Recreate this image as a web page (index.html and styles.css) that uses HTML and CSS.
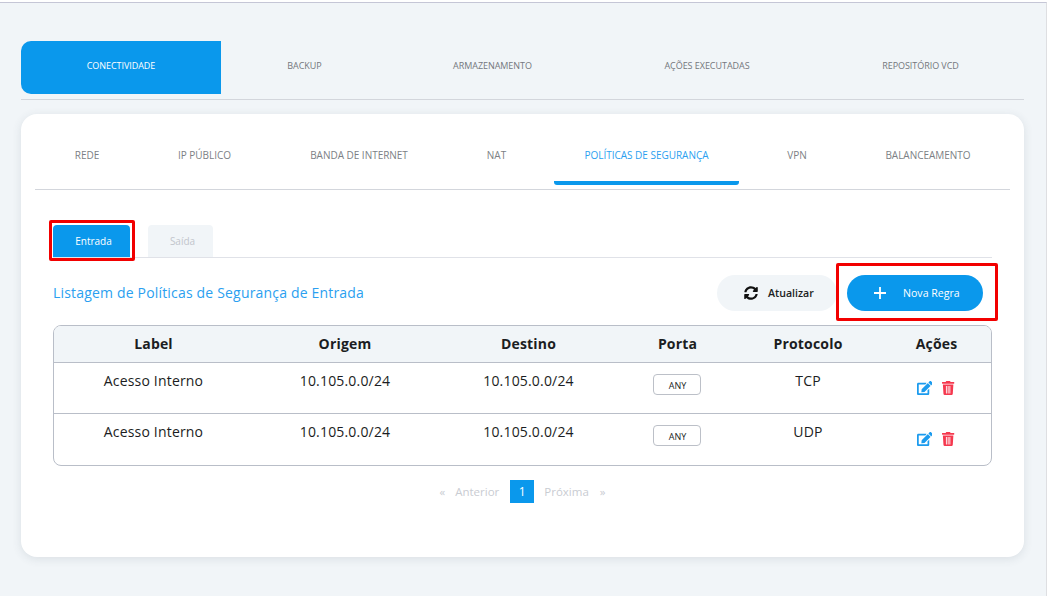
FILE: index.html
```html
<!DOCTYPE html>
<html lang="pt">
<head>
<meta charset="utf-8">
<title>Políticas de Segurança</title>
<link rel="stylesheet" href="styles.css">
</head>
<body>
<div class="page">
  <nav class="main-tabs">
    <a class="main-tab main-tab-1 is-active">CONECTIVIDADE</a>
    <a class="main-tab main-tab-2">BACKUP</a>
    <a class="main-tab main-tab-3">ARMAZENAMENTO</a>
    <a class="main-tab main-tab-4">AÇÕES EXECUTADAS</a>
    <a class="main-tab main-tab-5">REPOSITÓRIO VCD</a>
  </nav>
  <main class="card">
    <nav class="sub-tabs">
      <a class="sub-tab st-1">REDE</a>
      <a class="sub-tab st-2">IP PÚBLICO</a>
      <a class="sub-tab st-3">BANDA DE INTERNET</a>
      <a class="sub-tab st-4">NAT</a>
      <a class="sub-tab st-5 is-active">POLÍTICAS DE SEGURANÇA</a>
      <a class="sub-tab st-6">VPN</a>
      <a class="sub-tab st-7">BALANCEAMENTO</a>
    </nav>
    <section class="content">
      <div class="pills">
        <a class="pill pill-on">Entrada<span class="mark mark-pill"></span></a>
        <a class="pill pill-off">Saída</a>
      </div>
      <div class="toolbar">
        <h2 class="title">Listagem de Políticas de Segurança de Entrada</h2>
        <div class="actions">
          <button class="btn btn-light">
            <svg class="ico-refresh" viewBox="0 0 512 512"><path d="M370.7 133.3C339.5 104 298.9 88 255.800 88c-77.500.1-144.300 53.200-162.800 126.900-1.300 5.400-6.100 9.200-11.700 9.200H24.100c-7.500 0-13.200-6.800-11.800-14.200C33.900 94.900 134.800 8 256 8c66.500 0 126.800 26.100 171.300 68.700L463 41c15.100-15.100 41-4.400 41 17v134c0 13.300-10.700 24-24 24H346c-21.400 0-32.100-25.900-17-41zM32 296h134c21.400 0 32.100 25.900 17 41l-41.800 41.800c31.300 29.300 71.800 45.300 114.900 45.200 77.400-.1 144.300-53.100 162.800-126.800 1.300-5.400 6.100-9.200 11.700-9.200h57.300c7.500 0 13.200 6.800 11.800 14.200C478.100 417.100 377.200 504 256 504c-66.500 0-126.800-26.100-171.300-68.700L49 471c-15.100 15.100-41 4.400-41-17V320c0-13.300 10.700-24 24-24z"/></svg>
            Atualizar
          </button>
          <button class="btn btn-primary">
            <svg class="ico-plus" viewBox="0 0 12 12"><path d="M6 0v12M0 6h12"/></svg>
            Nova Regra
            <span class="mark mark-btn"></span>
          </button>
        </div>
      </div>
      <div class="table">
        <div class="row head">
          <div>Label</div><div>Origem</div><div>Destino</div><div>Porta</div><div>Protocolo</div><div>Ações</div>
        </div>
        <div class="row body">
          <div>Acesso Interno</div><div>10.105.0.0/24</div><div>10.105.0.0/24</div>
          <div><span class="any">ANY</span></div><div>TCP</div>
          <div class="ops">
            <svg class="ico-edit" viewBox="0 0 576 512"><path d="M402.600 83.200l90.200 90.200c3.800 3.800 3.800 10 0 13.800L274.400 405.600l-92.800 10.300c-12.400 1.400-22.900-9.100-21.500-21.500l10.300-92.800L388.800 83.200c3.800-3.800 10-3.800 13.800 0zm162-22.900l-48.800-48.800c-15.200-15.200-39.900-15.200-55.200 0l-35.400 35.400c-3.800 3.800-3.800 10 0 13.800l90.200 90.200c3.800 3.800 10 3.800 13.800 0l35.400-35.400c15.200-15.300 15.200-40 0-55.200zM384 346.200V448H64V128h229.800c3.200 0 6.200-1.300 8.500-3.500l40-40c7.600-7.600 2.200-20.500-8.500-20.500H48C21.500 64 0 85.500 0 112v352c0 26.500 21.500 48 48 48h352c26.500 0 48-21.500 48-48V306.200c0-10.700-12.900-16-20.500-8.500l-40 40c-2.200 2.300-3.500 5.300-3.500 8.500z"/></svg>
            <svg class="ico-trash" viewBox="0 0 448 512"><path d="M432 32H312l-9.400-18.700A24 24 0 0 0 281.100 0H166.800a23.700 23.700 0 0 0-21.400 13.300L136 32H16A16 16 0 0 0 0 48v32a16 16 0 0 0 16 16h416a16 16 0 0 0 16-16V48a16 16 0 0 0-16-16zM53.200 467a48 48 0 0 0 47.900 45h245.800a48 48 0 0 0 47.900-45L416 128H32zM144 184h32v272h-32zm64 0h32v272h-32zm64 0h32v272h-32z" fill-rule="evenodd"/></svg>
          </div>
        </div>
        <div class="row body">
          <div>Acesso Interno</div><div>10.105.0.0/24</div><div>10.105.0.0/24</div>
          <div><span class="any">ANY</span></div><div>UDP</div>
          <div class="ops">
            <svg class="ico-edit" viewBox="0 0 576 512"><path d="M402.600 83.200l90.200 90.200c3.800 3.800 3.800 10 0 13.800L274.400 405.600l-92.800 10.300c-12.400 1.400-22.900-9.100-21.500-21.500l10.300-92.800L388.800 83.200c3.800-3.800 10-3.800 13.800 0zm162-22.900l-48.800-48.800c-15.200-15.200-39.900-15.200-55.200 0l-35.400 35.400c-3.800 3.800-3.800 10 0 13.800l90.200 90.200c3.800 3.800 10 3.800 13.800 0l35.400-35.400c15.200-15.300 15.200-40 0-55.200zM384 346.200V448H64V128h229.800c3.200 0 6.200-1.300 8.500-3.500l40-40c7.600-7.600 2.200-20.500-8.500-20.500H48C21.500 64 0 85.500 0 112v352c0 26.500 21.500 48 48 48h352c26.500 0 48-21.500 48-48V306.200c0-10.700-12.900-16-20.500-8.500l-40 40c-2.200 2.300-3.500 5.300-3.500 8.500z"/></svg>
            <svg class="ico-trash" viewBox="0 0 448 512"><path d="M432 32H312l-9.400-18.700A24 24 0 0 0 281.100 0H166.800a23.700 23.700 0 0 0-21.400 13.300L136 32H16A16 16 0 0 0 0 48v32a16 16 0 0 0 16 16h416a16 16 0 0 0 16-16V48a16 16 0 0 0-16-16zM53.200 467a48 48 0 0 0 47.900 45h245.800a48 48 0 0 0 47.900-45L416 128H32zM144 184h32v272h-32zm64 0h32v272h-32zm64 0h32v272h-32z" fill-rule="evenodd"/></svg>
          </div>
        </div>
      </div>
      <nav class="pager">
        <span class="pg pg-arrow">«</span>
        <span class="pg pg-word pg-prev">Anterior</span>
        <span class="pg pg-current">1</span>
        <span class="pg pg-word pg-next">Próxima</span>
        <span class="pg pg-arrow">»</span>
      </nav>
    </section>
  </main>
</div>
</body>
</html>
```
FILE: styles.css
```css
* { box-sizing: border-box; }
html, body { margin: 0; height: 100%; }
body {
  background: #fff;
  font-family: "Open Sans", "Noto Sans", sans-serif;
  overflow: hidden;
}
.page {
  margin-top: 2px;
  margin-right: 1px;
  height: 594px;
  background: #f1f5f8;
  border-top: 1px solid #c5c6d6;
  border-right: 1px solid #dedfe2;
  padding: 38px 22px 0 21px;
}
.main-tabs {
  display: flex;
  height: 59px;
  padding-bottom: 5px;
  border-bottom: 1px solid #d3d6dc;
}
.main-tab {
  display: flex;
  align-items: center;
  justify-content: center;
  padding-bottom: 4px;
  font-size: 9px;
  letter-spacing: -0.05px;
  color: #74777d;
  flex: none;
}
.main-tab-1 { width: 200px; }
.main-tab-2 { width: 167px; }
.main-tab-3 { width: 209px; }
.main-tab-4 { width: 220px; }
.main-tab-5 { width: 207px; }
.main-tab.is-active {
  background: #0a98ec;
  color: #fff;
  border-radius: 10px 0 0 10px;
}
.card {
  margin-top: 14px;
  height: 443px;
  background: #fff;
  border-radius: 16px;
  box-shadow: 0 2px 10px rgba(60, 70, 90, .12);
  padding: 0 14px;
}
.sub-tabs {
  display: flex;
  height: 76px;
  border-bottom: 1px solid #d3d6dc;
}
.sub-tab {
  display: flex;
  align-items: center;
  justify-content: center;
  height: 71px;
  padding-top: 11px;
  font-size: 10px;
  letter-spacing: -0.02px;
  color: #7c7f85;
  flex: none;
}
.st-1 { width: 104px; }
.st-2 { width: 131px; }
.st-3 { width: 178px; }
.st-4 { width: 97px; margin-right: 9px; }
.st-5 { width: 185px; }
.st-6 { width: 116px; }
.st-7 { width: 146px; }
.sub-tab.is-active {
  align-items: flex-start;
  padding-top: 34px;
  border-bottom: 4px solid #0a98ec;
  border-radius: 0 0 3px 3px;
  color: #2b9ff0;
}
.content { padding: 35px 18px 0; }
.pills {
  display: flex;
  gap: 18px;
  height: 33px;
  border-bottom: 1px solid #e0e2e8;
}
.pill {
  display: flex;
  align-items: center;
  justify-content: center;
  height: 32px;
  padding-left: 4px;
  font-size: 10px;
  font-weight: 500;
  border-radius: 4px 4px 0 0;
}
.pill-on { width: 77px; background: #0a98ec; color: #fff; position: relative; }
.pill-off { width: 65px; background: #f1f5f8; color: #c2c5cc; }
.mark { position: absolute; border: 3px solid #f20000; pointer-events: none; }
.mark-pill { left: -4px; top: -5px; width: 86px; height: 41px; border-radius: 2px; }
.mark-btn { left: -11px; top: -12px; width: 162px; height: 58px; border-radius: 2px; }
.toolbar {
  display: flex;
  justify-content: space-between;
  height: 67px;
  padding: 17px 9px 14px 0;
}
.title {
  margin: 0;
  align-self: center;
  padding-bottom: 2px;
  font-size: 14px;
  font-weight: 400;
  letter-spacing: .18px;
  color: #2b9ff0;
}
.actions { display: flex; gap: 10px; }
.btn {
  display: flex;
  align-items: center;
  height: 36px;
  border: 0;
  border-radius: 18px;
  font-family: inherit;
  font-size: 10.600px;
  font-weight: 600;
}
.btn-light { width: 120px; background: #f1f5f8; color: #1b1d22; padding: 0 0 0 27px; gap: 10px; }
.btn-primary { width: 136px; background: #0a98ec; color: #fff; padding: 0 0 0 27px; gap: 17px; position: relative; font-weight: 400; }
.ico-refresh { width: 14px; height: 14px; fill: #111; }
.ico-plus { width: 12px; height: 12px; fill: none; stroke: #fff; stroke-width: 1.800; }
.table {
  border: 1px solid #b9bec8;
  border-radius: 8px;
  height: 141px;
  overflow: hidden;
}
.row {
  display: grid;
  grid-template-columns: 199px 184px 183px 115px 146px 111px;
  text-align: center;
  font-size: 14px;
  letter-spacing: .18px;
  color: #1b1d22;
}
.head {
  height: 37px;
  background: #f1f5f8;
  border-bottom: 1px solid #b9bec8;
  font-weight: 700;
  line-height: 36px;
}
.body {
  height: 51px;
  border-bottom: 1px solid #b9bec8;
  padding-top: 9px;
  line-height: 18px;
}
.body:last-child { border-bottom: 0; }
.any {
  display: block;
  width: 48px;
  height: 21px;
  margin: 2px auto 0;
  transform: translateX(-1px);
  padding-left: 2px;
  border: 1px solid #bcc0c8;
  border-radius: 4px;
  font-size: 9px;
  letter-spacing: 0;
  line-height: 21px;
}
.ops { display: flex; justify-content: center; gap: 10px; padding-top: 9px; padding-right: 2px; }
.ico-edit { width: 15.750px; height: 14px; fill: #1b9bee; }
.ico-trash { width: 12.250px; height: 14px; fill: #f5394f; }
.pager {
  display: flex;
  justify-content: center;
  align-items: center;
  margin-top: 14px;
  height: 23px;
  font-size: 11.500px;
  color: #c9ccd2;
}
.pg { display: block; }
.pg-prev { margin: 0 11px 0 10px; }
.pg-next { margin: 0 11px 0 10px; }
.pg-current {
  width: 24px;
  height: 23px;
  line-height: 23px;
  font-size: 12px;
  text-align: center;
  background: #0a98ec;
  color: #fff;
}
```
